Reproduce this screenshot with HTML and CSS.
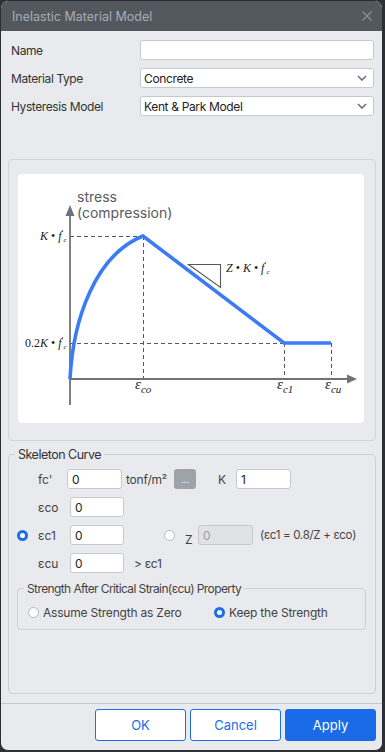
FILE: index.html
```html
<!DOCTYPE html>
<html>
<head>
<meta charset="utf-8">
<link rel="stylesheet" href="styles.css">
</head>
<body>
<div class="dialog">
  <div class="titlebar">
    <span class="title">Inelastic Material Model</span>
    <svg class="close" width="10" height="10" viewBox="0 0 10 10"><path d="M0.5 0.5 L9.5 9.5 M9.5 0.5 L0.5 9.5" stroke="#8c9198" stroke-width="1.2" fill="none"/></svg>
  </div>
  <div class="content">
    <div class="form">
      <div class="frow"><span class="flabel">Name</span><div class="field"></div></div>
      <div class="frow"><span class="flabel">Material Type</span><div class="field select"><span>Concrete</span><svg class="chev" width="10" height="6" viewBox="0 0 10 6"><path d="M1 1 L5 5 L9 1" stroke="#6d7178" stroke-width="1.6" fill="none"/></svg></div></div>
      <div class="frow"><span class="flabel">Hysteresis Model</span><div class="field select"><span>Kent &amp; Park Model</span><svg class="chev" width="10" height="6" viewBox="0 0 10 6"><path d="M1 1 L5 5 L9 1" stroke="#6d7178" stroke-width="1.6" fill="none"/></svg></div></div>
    </div>
    <div class="diagram">
      <div class="card">
        <svg width="346" height="249" viewBox="0 0 346 249">
          <g stroke="#55595f" stroke-width="1" stroke-dasharray="4 3" fill="none">
            <path d="M52 62.5 H125"/>
            <path d="M125.5 62 V205"/>
            <path d="M52 169.5 H266"/>
            <path d="M266.5 169 V205"/>
            <path d="M313.5 169 V205"/>
          </g>
          <g stroke="#6e7279" stroke-width="1.8" fill="none">
            <path d="M52 40 V231"/>
            <path d="M52 205 H331"/>
          </g>
          <path d="M52 31 L47.5 42 L56.5 42 Z" fill="#6e7279"/>
          <path d="M339 205 L329 200.5 L329 209.5 Z" fill="#6e7279"/>
          <path d="M52 205 C 55 146 77 81 125 62 L266 169 L313 169" stroke="#3b7cf6" stroke-width="3.6" fill="none" stroke-linejoin="miter"/>
          <path d="M170.5 90.5 H202.5 V113.5 Z" stroke="#55595f" stroke-width="1.1" fill="none"/>
          <text class="ax" x="59" y="28">stress</text>
          <text class="ax" x="59" y="44">(compression)</text>
          <text class="m" x="22" y="66"><tspan class="it">K</tspan> • <tspan class="it">f</tspan><tspan class="sup" dy="-4">′</tspan><tspan class="sub" dy="6">c</tspan></text>
          <text class="m" x="7" y="173">0.2<tspan class="it">K</tspan> • <tspan class="it">f</tspan><tspan class="sup" dy="-4">′</tspan><tspan class="sub" dy="6">c</tspan></text>
          <text class="m" x="208" y="98"><tspan class="it">Z</tspan> • <tspan class="it">K</tspan> • <tspan class="it">f</tspan><tspan class="sup" dy="-4">′</tspan><tspan class="sub" dy="6">c</tspan></text>
          <text class="eps" x="117" y="215">ε<tspan class="esub" dy="4">co</tspan></text>
          <text class="eps" x="259" y="215">ε<tspan class="esub" dy="4">c1</tspan></text>
          <text class="eps" x="307" y="215">ε<tspan class="esub" dy="4">cu</tspan></text>
        </svg>
      </div>
    </div>
    <fieldset class="skeleton">
      <legend>Skeleton Curve</legend>
      <div class="srow">
        <span class="lead"></span>
        <span class="slabel fc">fc'</span>
        <div class="inp w54">0</div>
        <span class="unit">tonf/m²</span>
        <span class="more">...</span>
        <span class="klabel">K</span>
        <div class="inp w54">1</div>
      </div>
      <div class="srow">
        <span class="radio-slot"></span>
        <span class="slabel">εco</span>
        <div class="inp w53">0</div>
      </div>
      <div class="srow">
        <span class="radio checked"></span>
        <span class="slabel">εc1</span>
        <div class="inp w53">0</div>
        <span class="radio zradio"></span>
        <span class="zlabel">Z</span>
        <div class="inp w54 disabled">0</div>
        <span class="formula">(εc1 = 0.8/Z + εco)</span>
      </div>
      <div class="srow">
        <span class="radio-slot"></span>
        <span class="slabel">εcu</span>
        <div class="inp w53">0</div>
        <span class="gt">&gt; εc1</span>
      </div>
      <fieldset class="strength">
        <legend>Strength After Critical Strain(εcu) Property</legend>
        <div class="opts">
          <span class="opt first"><span class="radio"></span><span>Assume Strength as Zero</span></span>
          <span class="opt"><span class="radio checked"></span><span>Keep the Strength</span></span>
        </div>
      </fieldset>
    </fieldset>
  </div>
  <div class="footer">
    <button class="btn outline">OK</button>
    <button class="btn outline">Cancel</button>
    <button class="btn primary">Apply</button>
  </div>
</div>
</body>
</html>
```
FILE: styles.css
```css
html, body {
  margin: 0;
  padding: 0;
  background: #2c2f34;
  width: 385px;
  height: 752px;
  overflow: hidden;
  font-family: Inter, "Noto Sans", sans-serif;
}

.dialog {
  width: 383px;
  height: 751px;
  box-sizing: border-box;
  border: 1px solid #2a2d31;
  border-radius: 8px;
  overflow: hidden;
  background: #e9eaed;
  display: flex;
  flex-direction: column;
}

.titlebar {
  height: 30px;
  flex: none;
  background: #53585f;
  display: flex;
  align-items: center;
  justify-content: space-between;
  padding: 0 10px 0 11px;
}

.title {
  color: #a7abb2;
  font-size: 12.5px;
}

.content {
  flex: 1;
  display: flex;
  flex-direction: column;
  padding: 9px 6px 9px 7px;
  min-height: 0;
}

.form {
  display: flex;
  flex-direction: column;
  gap: 8px;
  padding: 0 2px 0 3px;
}

.frow {
  display: flex;
  height: 20px;
  align-items: center;
}

.flabel {
  width: 129px;
  font-size: 12px;
  letter-spacing: -0.4px;
  color: #333;
}

.field {
  flex: 1;
  height: 20px;
  box-sizing: border-box;
  background: #fff;
  border: 1px solid #c6c8cc;
  border-radius: 3px;
}

.select {
  display: flex;
  align-items: center;
  justify-content: space-between;
  padding: 0 6px 0 3px;
  font-size: 12px;
  letter-spacing: -0.35px;
  color: #222;
}

.diagram {
  margin-top: 43px;
  height: 282px;
  box-sizing: border-box;
  border: 1px solid #d3d4d8;
  border-radius: 4px;
  padding: 14px 11px 17px 9px;
}

.card {
  width: 346px;
  height: 249px;
  background: #fff;
  border-radius: 4px;
}

.card svg {
  display: block;
}

.ax {
  font-family: Inter, sans-serif;
  font-size: 14px;
  fill: #565b62;
}

.m {
  font-family: "Liberation Serif", serif;
  font-size: 12px;
  fill: #222;
}

.it {
  font-style: italic;
}

.sup {
  font-size: 9px;
}

.sub {
  font-size: 7px;
  font-style: italic;
}

.eps {
  font-family: "Liberation Serif", serif;
  font-style: italic;
  font-size: 15px;
  fill: #222;
}

.esub {
  font-size: 11px;
}

.skeleton {
  flex: 1;
  margin: 6px 0 0 0;
  padding: 7px 9px 0 8px;
  border: 1px solid #cfd0d4;
  border-radius: 4px;
  min-width: 0;
  display: flex;
  flex-direction: column;
  gap: 8px;
}

.skeleton > legend {
  font-size: 12.5px;
  letter-spacing: -0.5px;
  color: #333;
  padding: 0 3px;
  margin-left: -2px;
}

.srow {
  display: flex;
  align-items: center;
  height: 20px;
  font-size: 12px;
  color: #333;
  white-space: nowrap;
}

.lead {
  width: 21px;
}

.radio-slot {
  width: 11px;
  margin-right: 10px;
}

.slabel {
  width: 32px;
  font-size: 12px;
  color: #444;
}

.slabel.fc {
  width: 29px;
}

.inp {
  height: 20px;
  box-sizing: border-box;
  background: #fff;
  border: 1px solid #c6c8cc;
  border-radius: 3px;
  font-size: 12px;
  color: #222;
  padding: 0 4px;
  display: flex;
  align-items: center;
}

.w54 { width: 55px; }
.w53 { width: 54px; }

.inp.disabled {
  background: #e1e2e5;
  color: #9a9ea4;
}

.unit {
  width: 48px;
  margin-left: 4px;
  color: #444;
  letter-spacing: -0.2px;
}

.more {
  width: 22px;
  height: 20px;
  background: #9ea2a9;
  border-radius: 3px;
  color: #fff;
  font-size: 10px;
  display: flex;
  align-items: center;
  justify-content: center;
}

.klabel {
  width: 18px;
  margin-left: 22px;
  color: #444;
}

.radio {
  width: 11px;
  height: 11px;
  box-sizing: border-box;
  border-radius: 50%;
  border: 1px solid #b5b8bd;
  background: #fff;
  flex: none;
}

.radio.checked {
  border: 3.5px solid #1a6fe8;
}

.srow > .radio.checked {
  margin-right: 10px;
}

.zradio {
  margin-left: 40px;
}

.zlabel {
  width: 13px;
  margin-left: 10px;
  padding-top: 8px;
  color: #444;
}

.formula {
  margin-left: 7px;
  color: #444;
  font-size: 11.5px;
  letter-spacing: -0.3px;
}

.gt {
  margin-left: 10px;
  color: #444;
  letter-spacing: -0.3px;
}

.strength {
  margin: 0;
  padding: 9px 6px 9px 6px;
  border: 1px solid #cfd0d4;
  border-radius: 4px;
  min-width: 0;
}

.strength > legend {
  font-size: 12px;
  letter-spacing: -0.6px;
  color: #444;
  padding: 0 3px;
}

.opts {
  display: flex;
  align-items: center;
  font-size: 12px;
  letter-spacing: -0.2px;
  color: #444;
  white-space: nowrap;
}

.opt {
  display: flex;
  align-items: center;
  gap: 4px;
}

.opt.first {
  width: 186px;
  margin-left: 4px;
}

.footer {
  flex: none;
  border-top: 1px solid #c8c9cd;
  padding: 5px 6px 9px 0;
  display: flex;
  justify-content: flex-end;
  gap: 4px;
}

.btn {
  width: 91px;
  height: 32px;
  border-radius: 3px;
  font-family: Inter, sans-serif;
  font-size: 13px;
  cursor: pointer;
}

.btn.outline {
  background: #fff;
  border: 1px solid #1a6fe8;
  color: #1a6fe8;
}

.btn.primary {
  background: #1a6be8;
  border: 1px solid #1a6be8;
  color: #fff;
}
```
